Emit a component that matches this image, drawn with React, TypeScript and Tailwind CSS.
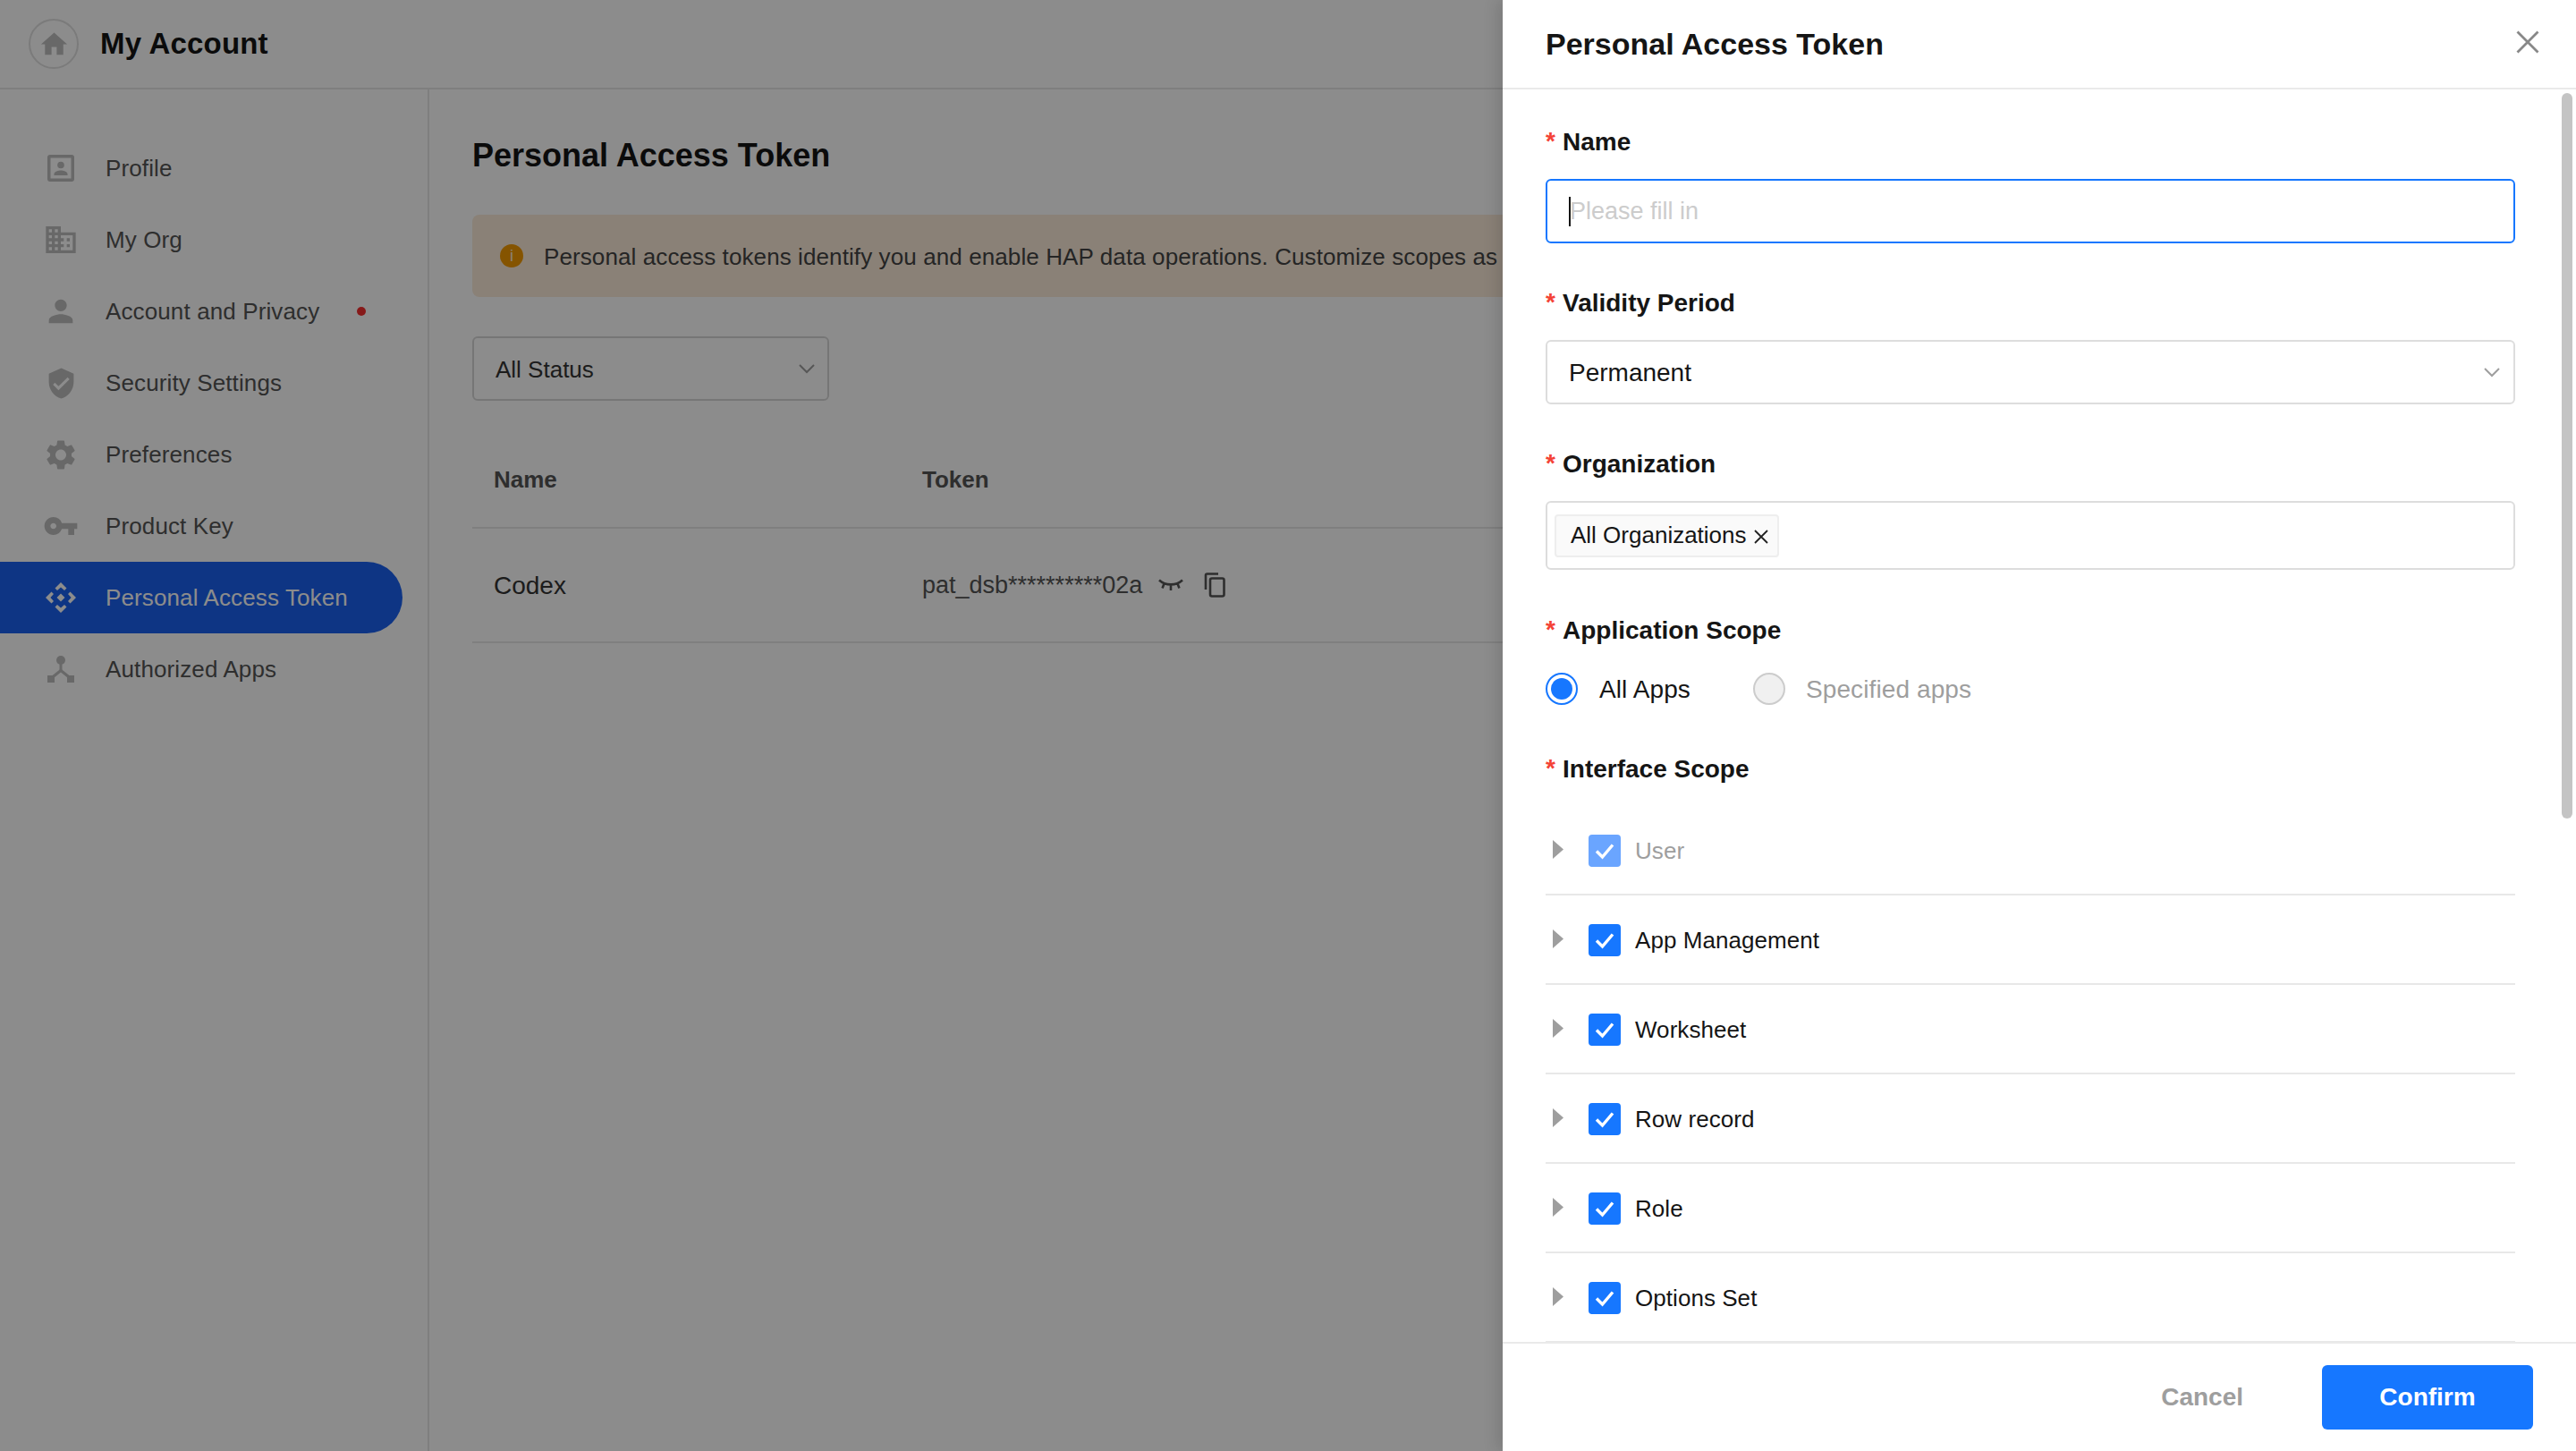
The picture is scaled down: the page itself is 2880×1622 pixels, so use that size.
import React from "react";
import { MdHome, MdDomain, MdPerson, MdVerifiedUser, MdSettings, MdVpnKey } from "react-icons/md";

const ProfileIcon = () => (
  <svg viewBox="0 0 30 30" className="w-[30px] h-[30px]" fill="currentColor">
    <path fillRule="evenodd" d="M3 0h24a3 3 0 0 1 3 3v24a3 3 0 0 1-3 3H3a3 3 0 0 1-3-3V3a3 3 0 0 1 3-3Zm.5 3.5v23h23v-23h-23Z" />
    <circle cx="15" cy="11.5" r="3.8" />
    <path d="M7.5 23v-1.6c0-2.6 5-4 7.5-4s7.5 1.4 7.5 4V23h-15Z" />
  </svg>
);

const TokenIcon = () => (
  <svg viewBox="0 0 34 34" className="w-[34px] h-[34px]" fill="currentColor">
    <path d="M17 0l6.5 6.5-2.5 2.5-4-3.6-4 3.6-2.5-2.5L17 0Z" />
    <path d="M17 34l-6.5-6.5 2.5-2.5 4 3.6 4-3.6 2.5 2.5L17 34Z" />
    <path d="M0 17l6.5-6.5 2.5 2.5-3.6 4 3.6 4-2.5 2.5L0 17Z" />
    <path d="M34 17l-6.5 6.5-2.5-2.5 3.6-4-3.6-4 2.5-2.5L34 17Z" />
    <path d="M17 12.5l4.5 4.5-4.5 4.5-4.5-4.5 4.5-4.5Z" />
  </svg>
);

const AuthIcon = () => (
  <svg viewBox="0 0 30 30" className="w-[30px] h-[30px]" fill="currentColor">
    <circle cx="15" cy="5" r="5" />
    <rect x="13.5" y="8" width="3" height="9" />
    <path d="M15 14.5l10 8-2 2.4-8-6.4-8 6.4-2-2.4 10-8Z" />
    <rect x="0" y="22" width="8" height="8" />
    <rect x="22" y="22" width="8" height="8" />
  </svg>
);

const nav = [
  { label: "Profile", icon: <ProfileIcon /> },
  { label: "My Org", icon: <MdDomain className="w-[40px] h-[40px]" /> },
  { label: "Account and Privacy", icon: <MdPerson className="w-[42px] h-[42px]" />, dot: true },
  { label: "Security Settings", icon: <MdVerifiedUser className="w-[37px] h-[37px]" /> },
  { label: "Preferences", icon: <MdSettings className="w-[41px] h-[41px]" /> },
  { label: "Product Key", icon: <MdVpnKey className="w-[40px] h-[40px]" /> },
  { label: "Personal Access Token", icon: <TokenIcon />, active: true },
  { label: "Authorized Apps", icon: <AuthIcon /> },
];

const Chevron = ({ className }: { className: string }) => (
  <svg viewBox="0 0 18 11" className={className} fill="none" stroke="currentColor" strokeWidth="2">
    <path d="M1 1l8 8 8-8" />
  </svg>
);

const Label = ({ children }: { children: React.ReactNode }) => (
  <div className="flex h-[40px] items-center pt-[1px] text-[28px] font-bold text-[#151515]">
    <span className="-mt-[2px] w-[19px] text-[28px] font-bold leading-none text-[#f44336]">*</span>
    {children}
  </div>
);

const Check = () => (
  <svg viewBox="0 0 36 36" className="h-[36px] w-[36px]" fill="none" stroke="#fff" strokeWidth="3.4">
    <path d="M9 18.5l6.5 6.5L27 11.5" />
  </svg>
);

const rows = [
  { label: "User", disabled: true },
  { label: "App Management" },
  { label: "Worksheet" },
  { label: "Row record" },
  { label: "Role" },
  { label: "Options Set" },
];

export default function App() {
  return (
    <div className="relative h-[1622px] w-[2880px] overflow-hidden bg-white font-['Liberation_Sans',Arial,sans-serif] text-[#151515]">
      <header className="flex h-[100px] items-center border-b-2 border-[#e8e8e8] pl-[32px]">
        <div className="flex h-[56px] w-[56px] items-center justify-center rounded-full border-2 border-[#e0e0e0] text-[#bdbdbd]">
          <MdHome className="h-[35px] w-[35px]" />
        </div>
        <h1 className="ml-[24px] text-[33px] font-bold tracking-[0.2px] text-[#151515]">My Account</h1>
      </header>

      <div className="flex h-[1522px]">
        <aside className="w-[480px] shrink-0 border-r-2 border-[#e8e8e8] pt-[48px]">
          {nav.map((n) => (
            <div
              key={n.label}
              className={
                n.active
                  ? "flex h-[80px] w-[450px] items-center rounded-r-full bg-[#1a62f0] text-white"
                  : "flex h-[80px] w-[450px] items-center text-[#555555]"
              }
            >
              <span className={n.active ? "ml-[48px] mr-[30px] flex w-[40px] justify-center text-white" : "ml-[48px] mr-[30px] flex w-[40px] justify-center text-[#bdbdbd]"}>
                {n.icon}
              </span>
              <span className="text-[26px] tracking-[0.12px]">{n.label}</span>
              {n.dot && <span className="ml-[42px] h-[10px] w-[10px] rounded-full bg-[#f52f2f]" />}
            </div>
          ))}
        </aside>

        <main className="min-w-0 flex-1 pl-[48px] pr-[48px] pt-[54px]">
          <h2 className="text-[36px] font-bold leading-[40px] text-[#151515]">Personal Access Token</h2>
          <div className="mt-[46px] flex h-[92px] items-center overflow-hidden rounded-[8px] bg-[#fbebd9] pl-[31px]">
            <span className="flex h-[26px] w-[26px] shrink-0 items-center justify-center rounded-full bg-[#f39a00] text-[18px] leading-none text-[#fbebd9]">i</span>
            <span className="ml-[23px] whitespace-nowrap pt-[2px] text-[26px] tracking-[0.1px] text-[#444444]">
              Personal access tokens identify you and enable HAP data operations. Customize scopes as
            </span>
          </div>
          <div className="mt-[44px] flex h-[72px] w-[399px] items-center justify-between rounded-[6px] border-2 border-[#d8d8d8] pl-[24px] pr-[14px] text-[26px] text-[#333333]">
            <span className="pt-[2px]">All Status</span>
            <Chevron className="h-[11px] w-[18px] text-[#9e9e9e]" />
          </div>
          <div className="mt-[34px] flex h-[109px] items-center border-b-2 border-[#e8e8e8] pl-[24px] pt-[2px] text-[26px] font-bold text-[#555555]">
            <span className="w-[479px]">Name</span>
            <span>Token</span>
          </div>
          <div className="flex h-[128px] items-center border-b-2 border-[#e8e8e8] pl-[24px] text-[28px]">
            <span className="w-[479px] pt-[1px] text-[#333333]">Codex</span>
            <span className="pt-[1px] text-[27px] text-[#555555]">pat_dsb**********02a</span>
            <svg viewBox="0 0 28 14" className="ml-[18px] h-[14px] w-[28px] text-[#555555]" fill="none" stroke="currentColor" strokeWidth="2.6">
              <path d="M1 1.5c7 6.5 19 6.5 26 0M14 7v6M6.5 5.5l-2 5M21.5 5.5l2 5" />
            </svg>
            <svg viewBox="0 0 24 28" className="ml-[23px] h-[28px] w-[24px] text-[#555555]" fill="none" stroke="currentColor" strokeWidth="2.6">
              <path d="M2 19V3a1.5 1.5 0 0 1 1.5-1.5H16" />
              <rect x="7" y="6.5" width="15.5" height="20" rx="2" />
            </svg>
          </div>
        </main>
      </div>

      {/* dimming overlay */}
      <div className="absolute inset-0 bg-black/45" />

      {/* drawer */}
      <section className="absolute bottom-0 right-0 top-0 flex w-[1200px] flex-col bg-white shadow-[-6px_0_16px_rgba(0,0,0,0.12)]">
        <div className="flex h-[100px] shrink-0 items-center justify-between border-b-2 border-[#eaeaea] pl-[48px] pr-[41px]">
          <h2 className="text-[34px] font-bold text-[#151515]">Personal Access Token</h2>
          <svg viewBox="0 0 26 26" className="mb-[4px] h-[26px] w-[26px] text-[#888888]" fill="none" stroke="currentColor" strokeWidth="2.8">
            <path d="M1.5 1.5l23 23M24.5 1.5l-23 23" />
          </svg>
        </div>

        <div className="min-h-0 flex-1 overflow-hidden pl-[48px] pr-[68px] pt-[38px]">
          <Label>Name</Label>
          <div className="mt-[22px] flex h-[72px] items-center rounded-[6px] border-2 border-[#1677ff] pl-[24px] text-[27px] text-[#cccccc]">
            <span className="-mr-[1px] h-[33px] w-[2px] bg-[#151515]" />
            Please fill in
          </div>

          <div className="mt-[46px]"><Label>Validity Period</Label></div>
          <div className="mt-[22px] flex h-[72px] items-center justify-between rounded-[6px] border-2 border-[#dddddd] pl-[24px] pr-[15px] text-[28px] text-[#151515]">
            <span className="pt-[1px]">Permanent</span>
            <Chevron className="h-[11px] w-[18px] text-[#9e9e9e]" />
          </div>

          <div className="mt-[46px]"><Label>Organization</Label></div>
          <div className="mt-[22px] flex h-[77px] items-center rounded-[6px] border-2 border-[#dddddd] pl-[8px]">
            <div className="flex h-[48px] items-center rounded-[4px] border-2 border-[#eeeeee] bg-[#fafafa] pl-[16px] pr-[10px] text-[26px] text-[#151515]">
              All Organizations
              <svg viewBox="0 0 16 16" className="ml-[8px] mt-[2px] h-[16px] w-[16px] text-[#222222]" fill="none" stroke="currentColor" strokeWidth="1.8">
                <path d="M1 1l14 14M15 1L1 15" />
              </svg>
            </div>
          </div>

          <div className="mt-[47px]"><Label>Application Scope</Label></div>
          <div className="mt-[28px] flex h-[36px] items-center text-[28px] tracking-[0.1px]">
            <span className="flex h-[36px] w-[36px] items-center justify-center rounded-full border-2 border-[#1677ff]">
              <span className="h-[24px] w-[24px] rounded-full bg-[#1677ff]" />
            </span>
            <span className="ml-[24px] w-[172px] pt-[1px] text-[#151515]">All Apps</span>
            <span className="h-[36px] w-[36px] rounded-full border-2 border-[#cccccc] bg-[#f0f0f0]" />
            <span className="ml-[23px] pt-[1px] text-[#9e9e9e]">Specified apps</span>
          </div>

          <div className="mt-[51px]"><Label>Interface Scope</Label></div>
          <div className="mt-[22px]">
            {rows.map((r) => (
              <div key={r.label} className="flex h-[100px] items-center border-b-2 border-[#e8e8e8] pt-[2px]">
                <svg viewBox="0 0 12 21" className="mb-[3px] ml-[8px] h-[21px] w-[12px] text-[#9e9e9e]" fill="currentColor">
                  <path d="M0 0l12 10.5L0 21Z" />
                </svg>
                <span className={r.disabled ? "ml-[28px] h-[36px] w-[36px] rounded-[4px] bg-[#6aa5ff]" : "ml-[28px] h-[36px] w-[36px] rounded-[4px] bg-[#1677ff]"}>
                  <Check />
                </span>
                <span className={r.disabled ? "ml-[16px] text-[26px] tracking-[0.05px] text-[#9e9e9e]" : "ml-[16px] text-[26px] tracking-[0.05px] text-[#151515]"}>{r.label}</span>
              </div>
            ))}
          </div>
        </div>

        <div className="flex h-[122px] shrink-0 items-center justify-end border-t-2 border-[#eaeaea] pr-[48px] text-[28px] font-bold">
          <span className="mr-[88px] text-[#9e9e9e]">Cancel</span>
          <button className="h-[72px] w-[236px] rounded-[6px] bg-[#1677ff] text-white">Confirm</button>
        </div>

        {/* scrollbar thumb */}
        <div className="absolute right-[4px] top-[104px] h-[811px] w-[12px] rounded-full bg-[#c4c4c4]" />
      </section>
    </div>
  );
}
